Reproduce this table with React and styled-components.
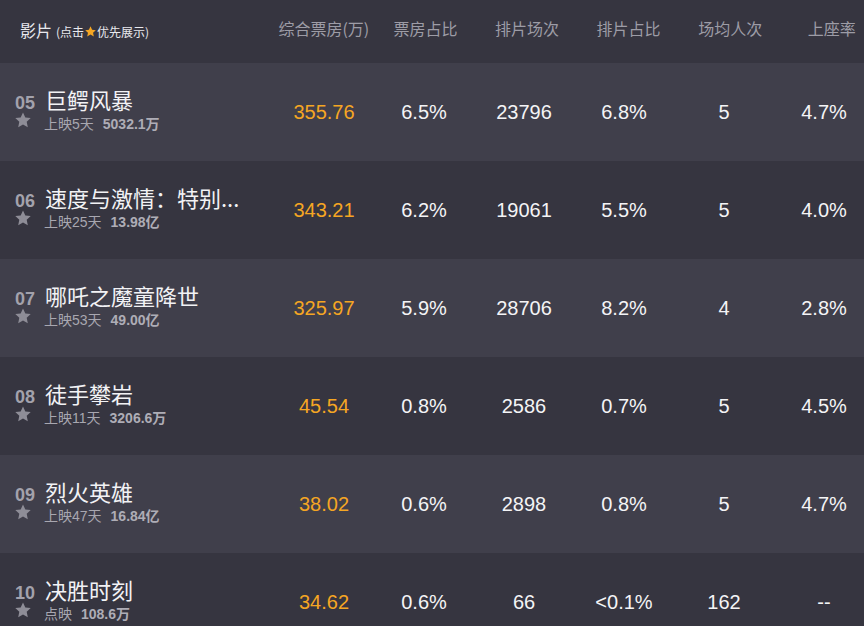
import React from 'react';
import styled, { createGlobalStyle } from 'styled-components';

const GlobalStyle = createGlobalStyle`
    html, body {
        margin: 0;
        padding: 0;
        background: #363540;
        overflow: hidden;
    }
`

const movies = [
    { rank: '05', name: '巨鳄风暴', release: '上映5天', total: '5032.1万', box: '355.76', boxRate: '6.5%', shows: '23796', showRate: '6.8%', avg: '5', seat: '4.7%' },
    { rank: '06', name: '速度与激情：特别...', release: '上映25天', total: '13.98亿', box: '343.21', boxRate: '6.2%', shows: '19061', showRate: '5.5%', avg: '5', seat: '4.0%' },
    { rank: '07', name: '哪吒之魔童降世', release: '上映53天', total: '49.00亿', box: '325.97', boxRate: '5.9%', shows: '28706', showRate: '8.2%', avg: '4', seat: '2.8%' },
    { rank: '08', name: '徒手攀岩', release: '上映11天', total: '3206.6万', box: '45.54', boxRate: '0.8%', shows: '2586', showRate: '0.7%', avg: '5', seat: '4.5%' },
    { rank: '09', name: '烈火英雄', release: '上映47天', total: '16.84亿', box: '38.02', boxRate: '0.6%', shows: '2898', showRate: '0.8%', avg: '5', seat: '4.7%' },
    { rank: '10', name: '决胜时刻', release: '点映', total: '108.6万', box: '34.62', boxRate: '0.6%', shows: '66', showRate: '<0.1%', avg: '162', seat: '--' },
];

const columns = ['综合票房(万)', '票房占比', '排片场次', '排片占比', '场均人次', '上座率'];

const Star = ({ size = 16, color = '#8e8d97' }) => (
    <svg width={size} height={size} viewBox="1 1.5 22 21">
        <path fill={color} d="M12 1.6l3.2 6.9 7.4.9-5.5 5.1 1.5 7.4L12 18.2l-6.6 3.7 1.5-7.4L1.4 9.4l7.4-.9z" />
    </svg>
);

const App = () => {
    return (
        <Page>
            <GlobalStyle />
            <Header>
                <FilmHead>
                    影片
                    <Hint>
                        (点击<Star size={11} color="#f5a623" />优先展示)
                    </Hint>
                </FilmHead>
                {columns.map((c) => (
                    <HeadCell key={c}>{c}</HeadCell>
                ))}
            </Header>
            {movies.map((m, i) => (
                <Row key={m.rank} light={i % 2 === 0}>
                    <FilmCell>
                        <TitleLine>
                            <Rank>{m.rank}</Rank>
                            <Name>{m.name}</Name>
                        </TitleLine>
                        <InfoLine>
                            <StarBox>
                                <Star />
                            </StarBox>
                            <Release>{m.release}</Release>
                            <Total>{m.total}</Total>
                        </InfoLine>
                    </FilmCell>
                    <Cell orange>{m.box}</Cell>
                    <Cell>{m.boxRate}</Cell>
                    <Cell>{m.shows}</Cell>
                    <Cell>{m.showRate}</Cell>
                    <Cell>{m.avg}</Cell>
                    <Cell>{m.seat}</Cell>
                </Row>
            ))}
        </Page>
    );
};

export default App;

const Page = styled.div`
    width: 864px;
    height: 626px;
    overflow: hidden;
    background: #363540;
    font-family: "Liberation Sans", "Noto Sans CJK SC", sans-serif;
`
const Header = styled.div`
    display: grid;
    grid-template-columns: 273px repeat(6, 101.6px);
    height: 63px;
    align-items: center;
    background: #363540;
`
const FilmHead = styled.div`
    display: flex;
    align-items: center;
    padding-left: 20px;
    padding-bottom: 4px;
    font-family: "Noto Sans CJK SC", sans-serif;
    font-size: 16px;
    color: #e9e9ee;
`
const Hint = styled.span`
    display: flex;
    align-items: center;
    margin-left: 4px;
    margin-top: 3px;
    font-size: 12px;
    gap: 1px;
`
const HeadCell = styled.div`
    text-align: center;
    font-family: "Noto Sans CJK SC", sans-serif;
    font-size: 16px;
    color: #9d9ca6;
    padding-bottom: 8px;
    white-space: nowrap;
`
const Row = styled.div`
    display: grid;
    grid-template-columns: 274px repeat(6, 100px);
    height: 98px;
    align-items: center;
    background: ${(p) => (p.light ? '#403f4b' : '#363540')};
`
const FilmCell = styled.div`
    display: flex;
    flex-direction: column;
    padding-left: 15px;
    padding-bottom: 6px;
`
const TitleLine = styled.div`
    display: flex;
    align-items: baseline;
    height: 26px;
`
const Rank = styled.span`
    width: 30px;
    font-size: 18px;
    font-weight: 700;
    color: #a3a2ac;
`
const Name = styled.span`
    font-family: "Noto Sans CJK SC", sans-serif;
    font-size: 22px;
    line-height: 26px;
    color: #f2f2f5;
    white-space: nowrap;
`
const InfoLine = styled.div`
    display: flex;
    align-items: center;
    height: 20px;
    margin-top: 1px;
`
const StarBox = styled.span`
    display: flex;
    width: 29px;
    margin-top: -6px;
`
const Release = styled.span`
    font-size: 14px;
    color: #a8a7b0;
`
const Total = styled.span`
    margin-left: 9px;
    font-size: 14px;
    color: #aeadb6;
    font-weight: 700;
`
const Cell = styled.div`
    text-align: center;
    font-size: 20px;
    color: ${(p) => (p.orange ? '#f5a623' : '#f4f4f6')};
`
